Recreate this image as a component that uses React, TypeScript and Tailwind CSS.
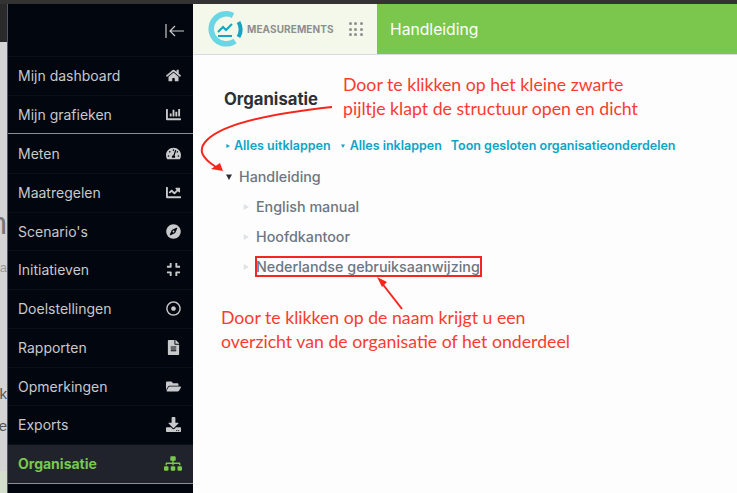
import {
  FaHome, FaChartBar, FaTachometerAlt, FaChartLine, FaCompass, FaCompress,
  FaRegDotCircle, FaFileAlt, FaFolderOpen, FaDownload, FaSitemap,
} from "react-icons/fa";
import type { ComponentType } from "react";

type Item = { label: string; Icon: ComponentType<{ className?: string }>; h: string; line?: string };

const items: Item[] = [
  { label: "Mijn dashboard", Icon: FaHome, h: "h-[39px]" },
  { label: "Mijn grafieken", Icon: FaChartBar, h: "h-[38px]", line: "border-b-[#8a8d93]" },
  { label: "Meten", Icon: FaTachometerAlt, h: "h-[40px]" },
  { label: "Maatregelen", Icon: FaChartLine, h: "h-[39px]" },
  { label: "Scenario's", Icon: FaCompass, h: "h-[38px]" },
  { label: "Initiatieven", Icon: FaCompress, h: "h-[39px]" },
  { label: "Doelstellingen", Icon: FaRegDotCircle, h: "h-[39px]" },
  { label: "Rapporten", Icon: FaFileAlt, h: "h-[39px]" },
  { label: "Opmerkingen", Icon: FaFolderOpen, h: "h-[38px]" },
  { label: "Exports", Icon: FaDownload, h: "h-[39px]" },
];

function Tri({ down, size, color }: { down?: boolean; size: number; color: string }) {
  return (
    <svg width={size} height={size} viewBox="0 0 10 10" fill={color} className="shrink-0">
      <path d={down ? "M0 1h10L5 10z" : "M1 0l9 5-9 5z"} />
    </svg>
  );
}

export default function App() {
  return (
    <div className="relative flex h-[493px] w-[737px] flex-col overflow-hidden bg-white font-['Inter','Liberation_Sans',sans-serif]">
      <div className="h-[4px] shrink-0 bg-[#333333]" />
      <div className="flex min-h-0 flex-1">
        <div className="relative w-[8px] shrink-0 overflow-hidden border-r border-[#55585c] bg-[#d4d4d4] font-['Liberation_Sans',sans-serif]">
          <div className="h-[38px] bg-[#2a2a2a]" />
          <span className="absolute right-[0px] top-[203px] text-[32px] leading-[32px] text-[#777777]">n</span>
          <span className="absolute right-[0px] top-[256px] text-[13px] leading-[16px] text-[#9a9a9a]">a</span>
          <span className="absolute right-[0px] top-[381px] text-[15px] leading-[18px] text-[#555555]">k</span>
          <span className="absolute right-[0px] top-[413px] text-[15px] leading-[18px] text-[#555555]">e</span>
          <div className="absolute bottom-0 left-0 h-[22px] w-full bg-[#d5dfcd]" />
        </div>
        <aside className="flex w-[185px] shrink-0 flex-col bg-[#02060f] text-[14px] text-[#c8c9cb]">
          <div className="flex h-[53px] shrink-0 items-center justify-end border-b border-[#0b0f18] pr-[8px] pt-[1px]">
            <svg width="20" height="16" viewBox="0 0 20 16" fill="none" stroke="#c8c9cb" strokeWidth="1.2">
              <path d="M1 1v14M19 8H5M10 3 5 8l5 5" />
            </svg>
          </div>
          {items.map(({ label, Icon, h, line }) => (
            <div key={label} className={`flex shrink-0 items-center justify-between border-b border-[#0b0f18] pb-[1px] pl-[10px] pr-[12px] ${h} ${line ?? ""}`}>
              <span>{label}</span>
              <Icon className="h-[15px] w-[15px]" />
            </div>
          ))}
          <div className="flex h-[39px] shrink-0 items-center justify-between border-b border-[#8a8d93] bg-[#20232b] pb-[1px] pl-[10px] pr-[11px] font-bold text-[#79c74c]">
            <span>Organisatie</span>
            <FaSitemap className="h-[15px] w-[18px]" />
          </div>
        </aside>
        <main className="flex min-w-0 flex-1 flex-col bg-[#fdfdfd]">
          <header className="flex h-[51px] shrink-0 border-b border-[#d9dde3]">
            <div className="flex w-[184px] items-center bg-[#f3f8ea] pl-[15px]">
              <svg width="36" height="36" viewBox="0 0 36 36" fill="none">
                <path d="M25 4.5A15 15 0 1 0 27 30" stroke="#69d6e6" strokeWidth="5.5" />
                <path d="M30.5 11A15 15 0 0 1 30.5 26" stroke="#12a5c8" strokeWidth="4" />
                <path d="M10 21l5-5 3 3 6-6" stroke="#12a5c8" strokeWidth="2" />
                <path d="M10 25h14" stroke="#12a5c8" strokeWidth="2" />
              </svg>
              <span className="ml-[3px] text-[10px] font-bold tracking-[0.1px] text-[#8d8f8f]">MEASUREMENTS</span>
              <span className="ml-[15px] grid grid-cols-3 gap-[2.5px]">
                {Array.from({ length: 9 }).map((_, i) => (
                  <span key={i} className="h-[3px] w-[3px] rounded-full bg-[#8d8f8f]" />
                ))}
              </span>
            </div>
            <div className="flex flex-1 items-center bg-[#7bc74d] pl-[13px] pt-[1px] text-[15.7px] text-white">Handleiding</div>
          </header>
          <div className="flex flex-col pl-[31px] pt-[33px]">
            <h1 className="h-[22px] text-[16.7px] leading-[22px] font-bold text-[#2d3036]">Organisatie</h1>
            <div className="mt-[26px] flex h-[20px] items-center text-[12.5px] font-semibold text-[#0ba5c6]">
              <span className="ml-[2px] mr-[4px]"><Tri size={4} color="#0ba5c6" /></span>
              <span>Alles uitklappen</span>
              <span className="ml-[10px] mr-[5px]"><Tri down size={4} color="#0ba5c6" /></span>
              <span>Alles inklappen</span>
              <span className="ml-[9px]">Toon gesloten organisatieonderdelen</span>
            </div>
            <div className="mt-[11px] flex h-[20px] items-center text-[14.3px] font-medium text-[#6d7682]">
              <span className="ml-[2px] mr-[7px]"><Tri down size={6} color="#2d3036" /></span>
              Handleiding
            </div>
            {["English manual", "Hoofdkantoor", "Nederlandse gebruiksaanwijzing"].map((t) => (
              <div key={t} className="mt-[10px] flex h-[20px] items-center text-[14.3px] font-medium text-[#6d7682]">
                <span className="ml-[19px] mr-[7px]"><Tri size={6} color="#dfe3e8" /></span>
                {t}
              </div>
            ))}
          </div>
        </main>
      </div>

      {/* Annotations drawn over the screenshot */}
      <div className="absolute left-[343px] top-[73px] font-['Lato','Liberation_Sans',sans-serif] text-[17.7px] leading-[24px] text-[#fb3b30]">
        Door te klikken op het kleine zwarte<br />pijltje klapt de structuur open en dicht
      </div>
      <div className="absolute left-[221px] top-[306px] font-['Lato','Liberation_Sans',sans-serif] text-[17.7px] leading-[24px] text-[#fb3b30]">
        Door te klikken op de naam krijgt u een<br />overzicht van de organisatie of het onderdeel
      </div>
      <div className="absolute left-[255px] top-[256px] h-[21px] w-[227px] border-2 border-[#f5261b]" />
      <svg className="absolute left-0 top-0" width="737" height="493" fill="none">
        <path d="M332 107C285 112 225 122 207 140C197 150 202 158 216 167" stroke="#f5261b" strokeWidth="2" />
        <path d="M211 169l9-6 3 8z" fill="#f5261b" />
        <path d="M402 309 381 282" stroke="#f5261b" strokeWidth="2" />
        <path d="M377 277l10 5-5 5z" fill="#f5261b" />
      </svg>
    </div>
  );
}
